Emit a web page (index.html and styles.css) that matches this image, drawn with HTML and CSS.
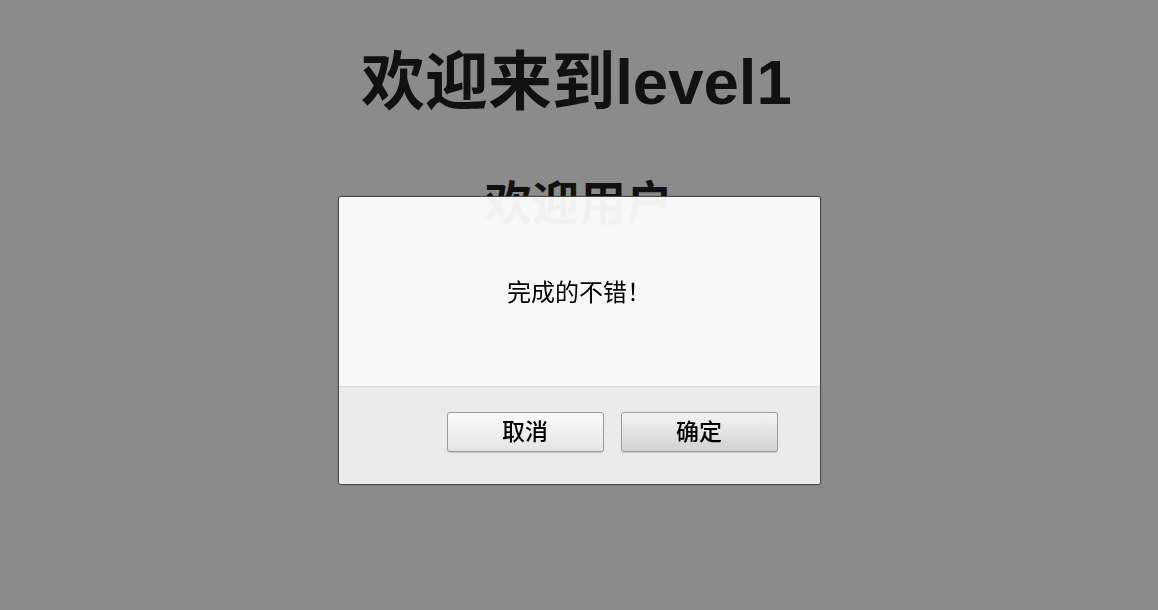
FILE: index.html
```html
<!DOCTYPE html>
<html lang="zh">
<head>
<meta charset="utf-8">
<title>level1</title>
<link rel="stylesheet" href="styles.css">
</head>
<body>
<main class="page">
  <h1 class="title">欢迎来到level1</h1>
  <h2 class="subtitle">欢迎用户</h2>
</main>
<div class="overlay">
  <div class="dialog">
    <div class="dialog-body">
      <p class="message">完成的不错！</p>
    </div>
    <div class="dialog-footer">
      <button class="btn">取消</button>
      <button class="btn btn-ok">确定</button>
    </div>
  </div>
</div>
</body>
</html>
```

FILE: styles.css
```css
html, body {
  margin: 0;
  padding: 0;
  height: 100%;
}
body {
  background: #8b8b8b;
  font-family: "Liberation Sans", "Noto Sans CJK SC", sans-serif;
  color: #111;
  overflow: hidden;
}
.page {
  display: flex;
  flex-direction: column;
  align-items: center;
}
.title {
  margin: 46px 5px 0 0;
  font-size: 63.5px;
  line-height: 72px;
  font-weight: bold;
}
.subtitle {
  margin: 58px 0 0;
  font-size: 47px;
  line-height: 56px;
  font-weight: bold;
}
.overlay {
  position: fixed;
  inset: 0;
  display: flex;
  justify-content: center;
  align-items: flex-start;
  padding-top: 196px;
}
.dialog {
  width: 481px;
  border: 1px solid #4a4a4a;
  border-radius: 3px;
  overflow: hidden;
  box-shadow: 0 0 2px rgba(0,0,0,0.25);
  display: flex;
  flex-direction: column;
}
.dialog-body {
  height: 189px;
  display: flex;
  align-items: center;
  justify-content: center;
  background: rgba(254,254,254,0.95);
  border-bottom: 1px solid #dcdcdc;
}
.message {
  margin: 0 0 2px 0;
  font-size: 24px;
  line-height: 28px;
  color: #000;
  font-family: "Noto Sans CJK SC", sans-serif;
}
.dialog-footer {
  height: 97px;
  box-sizing: border-box;
  padding: 25px 42px 0 0;
  display: flex;
  justify-content: flex-end;
  align-items: flex-start;
  gap: 17px;
  background: rgba(240,240,240,0.95);
}
.btn {
  box-sizing: border-box;
  width: 157px;
  height: 40px;
  border: 1px solid #9a9a9a;
  border-radius: 3px;
  background: linear-gradient(#fbfbfb, #e4e4e4);
  box-shadow: 0 1px 1px rgba(0,0,0,0.15);
  font-family: "Noto Sans CJK SC", sans-serif;
  font-size: 23px;
  font-weight: 500;
  color: #000;
  padding: 0 0 4px;
  line-height: 34px;
}
.btn-ok {
  background: linear-gradient(#f4f4f4, #d2d2d2);
}
```
